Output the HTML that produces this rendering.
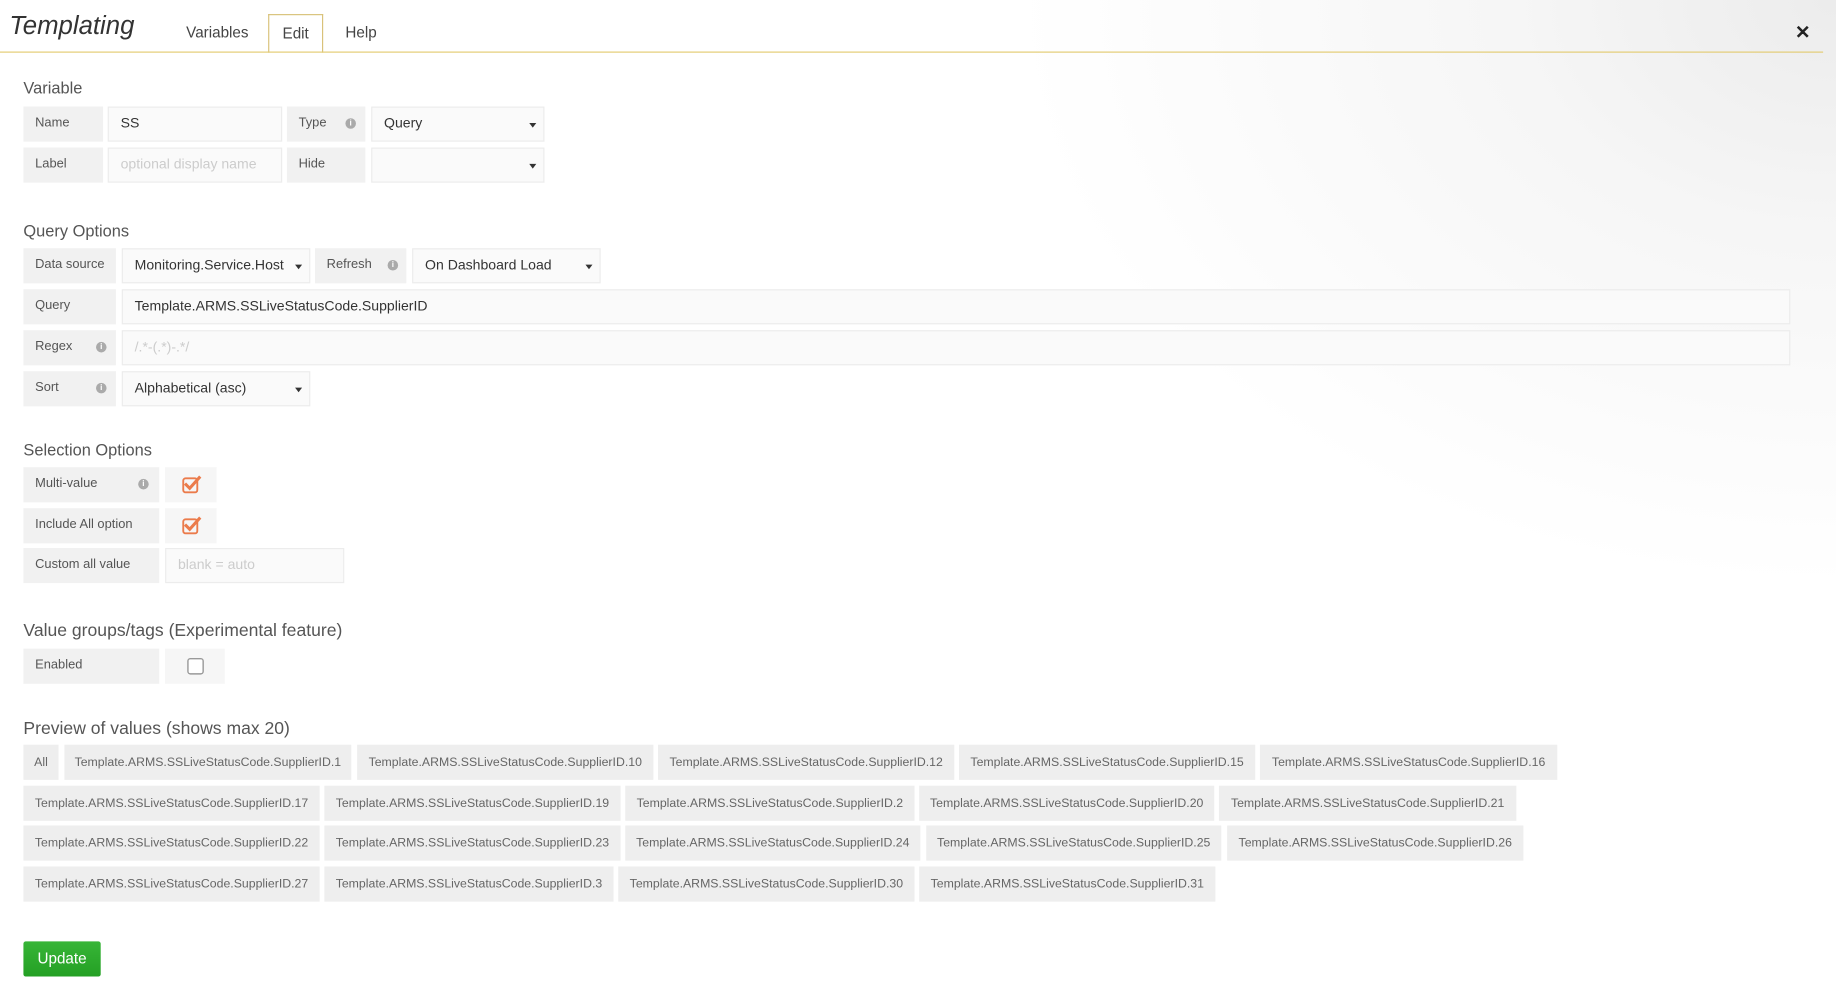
<!DOCTYPE html>
<html><head><meta charset="utf-8">
<style>
*{box-sizing:border-box;margin:0;padding:0}
html,body{width:1836px;height:981px;overflow:hidden;background:#fff}
#w{position:absolute;left:0;top:0;width:1568px;height:838px;transform:scale(1.17092);transform-origin:0 0;font-family:"Liberation Sans",sans-serif;color:#555;
background:radial-gradient(ellipse 700px 500px at 1568px 0px,#ececec 0%,#f6f6f6 40%,#fff 100%)}
.a{position:absolute}
.title{left:8px;top:9px;font-size:22px;font-style:italic;color:#333}
.tab{top:20px;font-size:13px;color:#444}
.edit{left:229px;top:12px;width:47px;height:33px;border:1px solid #d9c27a;border-bottom:none;background:#fff;font-size:13px;color:#444;text-align:center;line-height:32px}
.line{left:0;top:44px;width:1557px;height:1px;background:#e3cc73}
.close{left:1533px;top:18px;font-size:16px;font-weight:bold;color:#222}
.h{font-size:14px;color:#555}
.lb{background:#f1f1f1;font-size:11px;color:#555;padding-left:10px;line-height:29px;height:30px}
.in{background:#fafafa;border:1px solid #ececec;font-size:12px;color:#333;padding-left:10px;line-height:27px;height:30px}
.ar{position:absolute;right:6px;top:13px;border-left:3.5px solid transparent;border-right:3.5px solid transparent;border-top:4px solid #333}
.i{position:absolute;width:9px;height:9px;border-radius:50%;background:#aaa;color:#fff;font-size:7px;line-height:9px;text-align:center;font-weight:bold;top:10px}
.cb{background:#f6f6f6}
.tag{position:absolute;height:30px;background:#eee;font-size:10.5px;color:#666;line-height:30px;text-align:center;white-space:nowrap}
.btn{left:20px;top:804px;width:66px;height:30px;background:linear-gradient(#37b537,#24a024);color:#fff;font-size:13px;text-align:center;line-height:30px;border-radius:2px}
</style></head><body><div id="w">
<div class="a title">Templating</div>
<div class="a tab" style="left:159px">Variables</div>
<div class="a edit">Edit</div>
<div class="a tab" style="left:295px">Help</div>
<div class="a line"></div>
<div class="a close">✕</div>

<div class="a h" style="left:20px;top:67px">Variable</div>
<div class="a lb" style="left:20px;top:91px;width:68px">Name</div>
<div class="a in" style="left:92px;top:91px;width:149px">SS</div>
<div class="a lb" style="left:245px;top:91px;width:67px">Type<span class="i" style="left:50px">i</span></div>
<div class="a in" style="left:317px;top:91px;width:148px">Query<span class="ar"></span></div>
<div class="a lb" style="left:20px;top:126px;width:68px">Label</div>
<div class="a in" style="left:92px;top:126px;width:149px;color:#ccc">optional display name</div>
<div class="a lb" style="left:245px;top:126px;width:67px">Hide</div>
<div class="a in" style="left:317px;top:126px;width:148px"><span class="ar"></span></div>

<div class="a h" style="left:20px;top:189px">Query Options</div>
<div class="a lb" style="left:20px;top:212px;width:79px">Data source</div>
<div class="a in" style="left:104px;top:212px;width:161px">Monitoring.Service.Host<span class="ar"></span></div>
<div class="a lb" style="left:269px;top:212px;width:78px">Refresh<span class="i" style="left:62px">i</span></div>
<div class="a in" style="left:352px;top:212px;width:161px">On Dashboard Load<span class="ar"></span></div>
<div class="a lb" style="left:20px;top:247px;width:79px">Query</div>
<div class="a in" style="left:104px;top:247px;width:1425px">Template.ARMS.SSLiveStatusCode.SupplierID</div>
<div class="a lb" style="left:20px;top:282px;width:79px">Regex<span class="i" style="left:62px">i</span></div>
<div class="a in" style="left:104px;top:282px;width:1425px;color:#ccc">/.*-(.*)-.*/</div>
<div class="a lb" style="left:20px;top:317px;width:79px">Sort<span class="i" style="left:62px">i</span></div>
<div class="a in" style="left:104px;top:317px;width:161px">Alphabetical (asc)<span class="ar"></span></div>

<div class="a h" style="left:20px;top:376px">Selection Options</div>
<div class="a lb" style="left:20px;top:399px;width:116px">Multi-value<span class="i" style="left:98px">i</span></div>
<div class="a cb" style="left:141px;top:399px;width:44px;height:30px"><svg width="44" height="30"><rect x="15.5" y="9.5" width="12" height="12" rx="2" fill="none" stroke="#eb7b4b" stroke-width="1.6"/><path d="M17 14 l4 4 l9-10" fill="none" stroke="#eb7b4b" stroke-width="2.6"/></svg></div>
<div class="a lb" style="left:20px;top:434px;width:116px">Include All option</div>
<div class="a cb" style="left:141px;top:434px;width:44px;height:30px"><svg width="44" height="30"><rect x="15.5" y="9.5" width="12" height="12" rx="2" fill="none" stroke="#eb7b4b" stroke-width="1.6"/><path d="M17 14 l4 4 l9-10" fill="none" stroke="#eb7b4b" stroke-width="2.6"/></svg></div>
<div class="a lb" style="left:20px;top:468px;width:116px">Custom all value</div>
<div class="a in" style="left:141px;top:468px;width:153px;color:#ccc">blank = auto</div>

<div class="a h" style="left:20px;top:530px;font-size:15px">Value groups/tags (Experimental feature)</div>
<div class="a lb" style="left:20px;top:554px;width:116px">Enabled</div>
<div class="a cb" style="left:141px;top:554px;width:51px;height:30px"><svg width="51" height="30"><rect x="19.5" y="8.5" width="13" height="13" rx="2" fill="#fff" stroke="#999" stroke-width="1.2"/></svg></div>

<div class="a h" style="left:20px;top:614px;font-size:15px">Preview of values (shows max 20)</div>
<div class="tag" style="left:20px;top:636px;width:30px">All</div>
<div class="tag" style="left:55px;top:636px;width:245px">Template.ARMS.SSLiveStatusCode.SupplierID.1</div>
<div class="tag" style="left:305px;top:636px;width:253px">Template.ARMS.SSLiveStatusCode.SupplierID.10</div>
<div class="tag" style="left:562px;top:636px;width:253px">Template.ARMS.SSLiveStatusCode.SupplierID.12</div>
<div class="tag" style="left:819px;top:636px;width:253px">Template.ARMS.SSLiveStatusCode.SupplierID.15</div>
<div class="tag" style="left:1076px;top:636px;width:254px">Template.ARMS.SSLiveStatusCode.SupplierID.16</div>
<div class="tag" style="left:20px;top:671px;width:253px">Template.ARMS.SSLiveStatusCode.SupplierID.17</div>
<div class="tag" style="left:277px;top:671px;width:253px">Template.ARMS.SSLiveStatusCode.SupplierID.19</div>
<div class="tag" style="left:534px;top:671px;width:247px">Template.ARMS.SSLiveStatusCode.SupplierID.2</div>
<div class="tag" style="left:785px;top:671px;width:252px">Template.ARMS.SSLiveStatusCode.SupplierID.20</div>
<div class="tag" style="left:1041px;top:671px;width:254px">Template.ARMS.SSLiveStatusCode.SupplierID.21</div>
<div class="tag" style="left:20px;top:705px;width:253px">Template.ARMS.SSLiveStatusCode.SupplierID.22</div>
<div class="tag" style="left:277px;top:705px;width:253px">Template.ARMS.SSLiveStatusCode.SupplierID.23</div>
<div class="tag" style="left:534px;top:705px;width:252px">Template.ARMS.SSLiveStatusCode.SupplierID.24</div>
<div class="tag" style="left:791px;top:705px;width:252px">Template.ARMS.SSLiveStatusCode.SupplierID.25</div>
<div class="tag" style="left:1048px;top:705px;width:253px">Template.ARMS.SSLiveStatusCode.SupplierID.26</div>
<div class="tag" style="left:20px;top:740px;width:253px">Template.ARMS.SSLiveStatusCode.SupplierID.27</div>
<div class="tag" style="left:277px;top:740px;width:247px">Template.ARMS.SSLiveStatusCode.SupplierID.3</div>
<div class="tag" style="left:528px;top:740px;width:253px">Template.ARMS.SSLiveStatusCode.SupplierID.30</div>
<div class="tag" style="left:785px;top:740px;width:253px">Template.ARMS.SSLiveStatusCode.SupplierID.31</div>

<div class="a btn">Update</div>
</div></body></html>
